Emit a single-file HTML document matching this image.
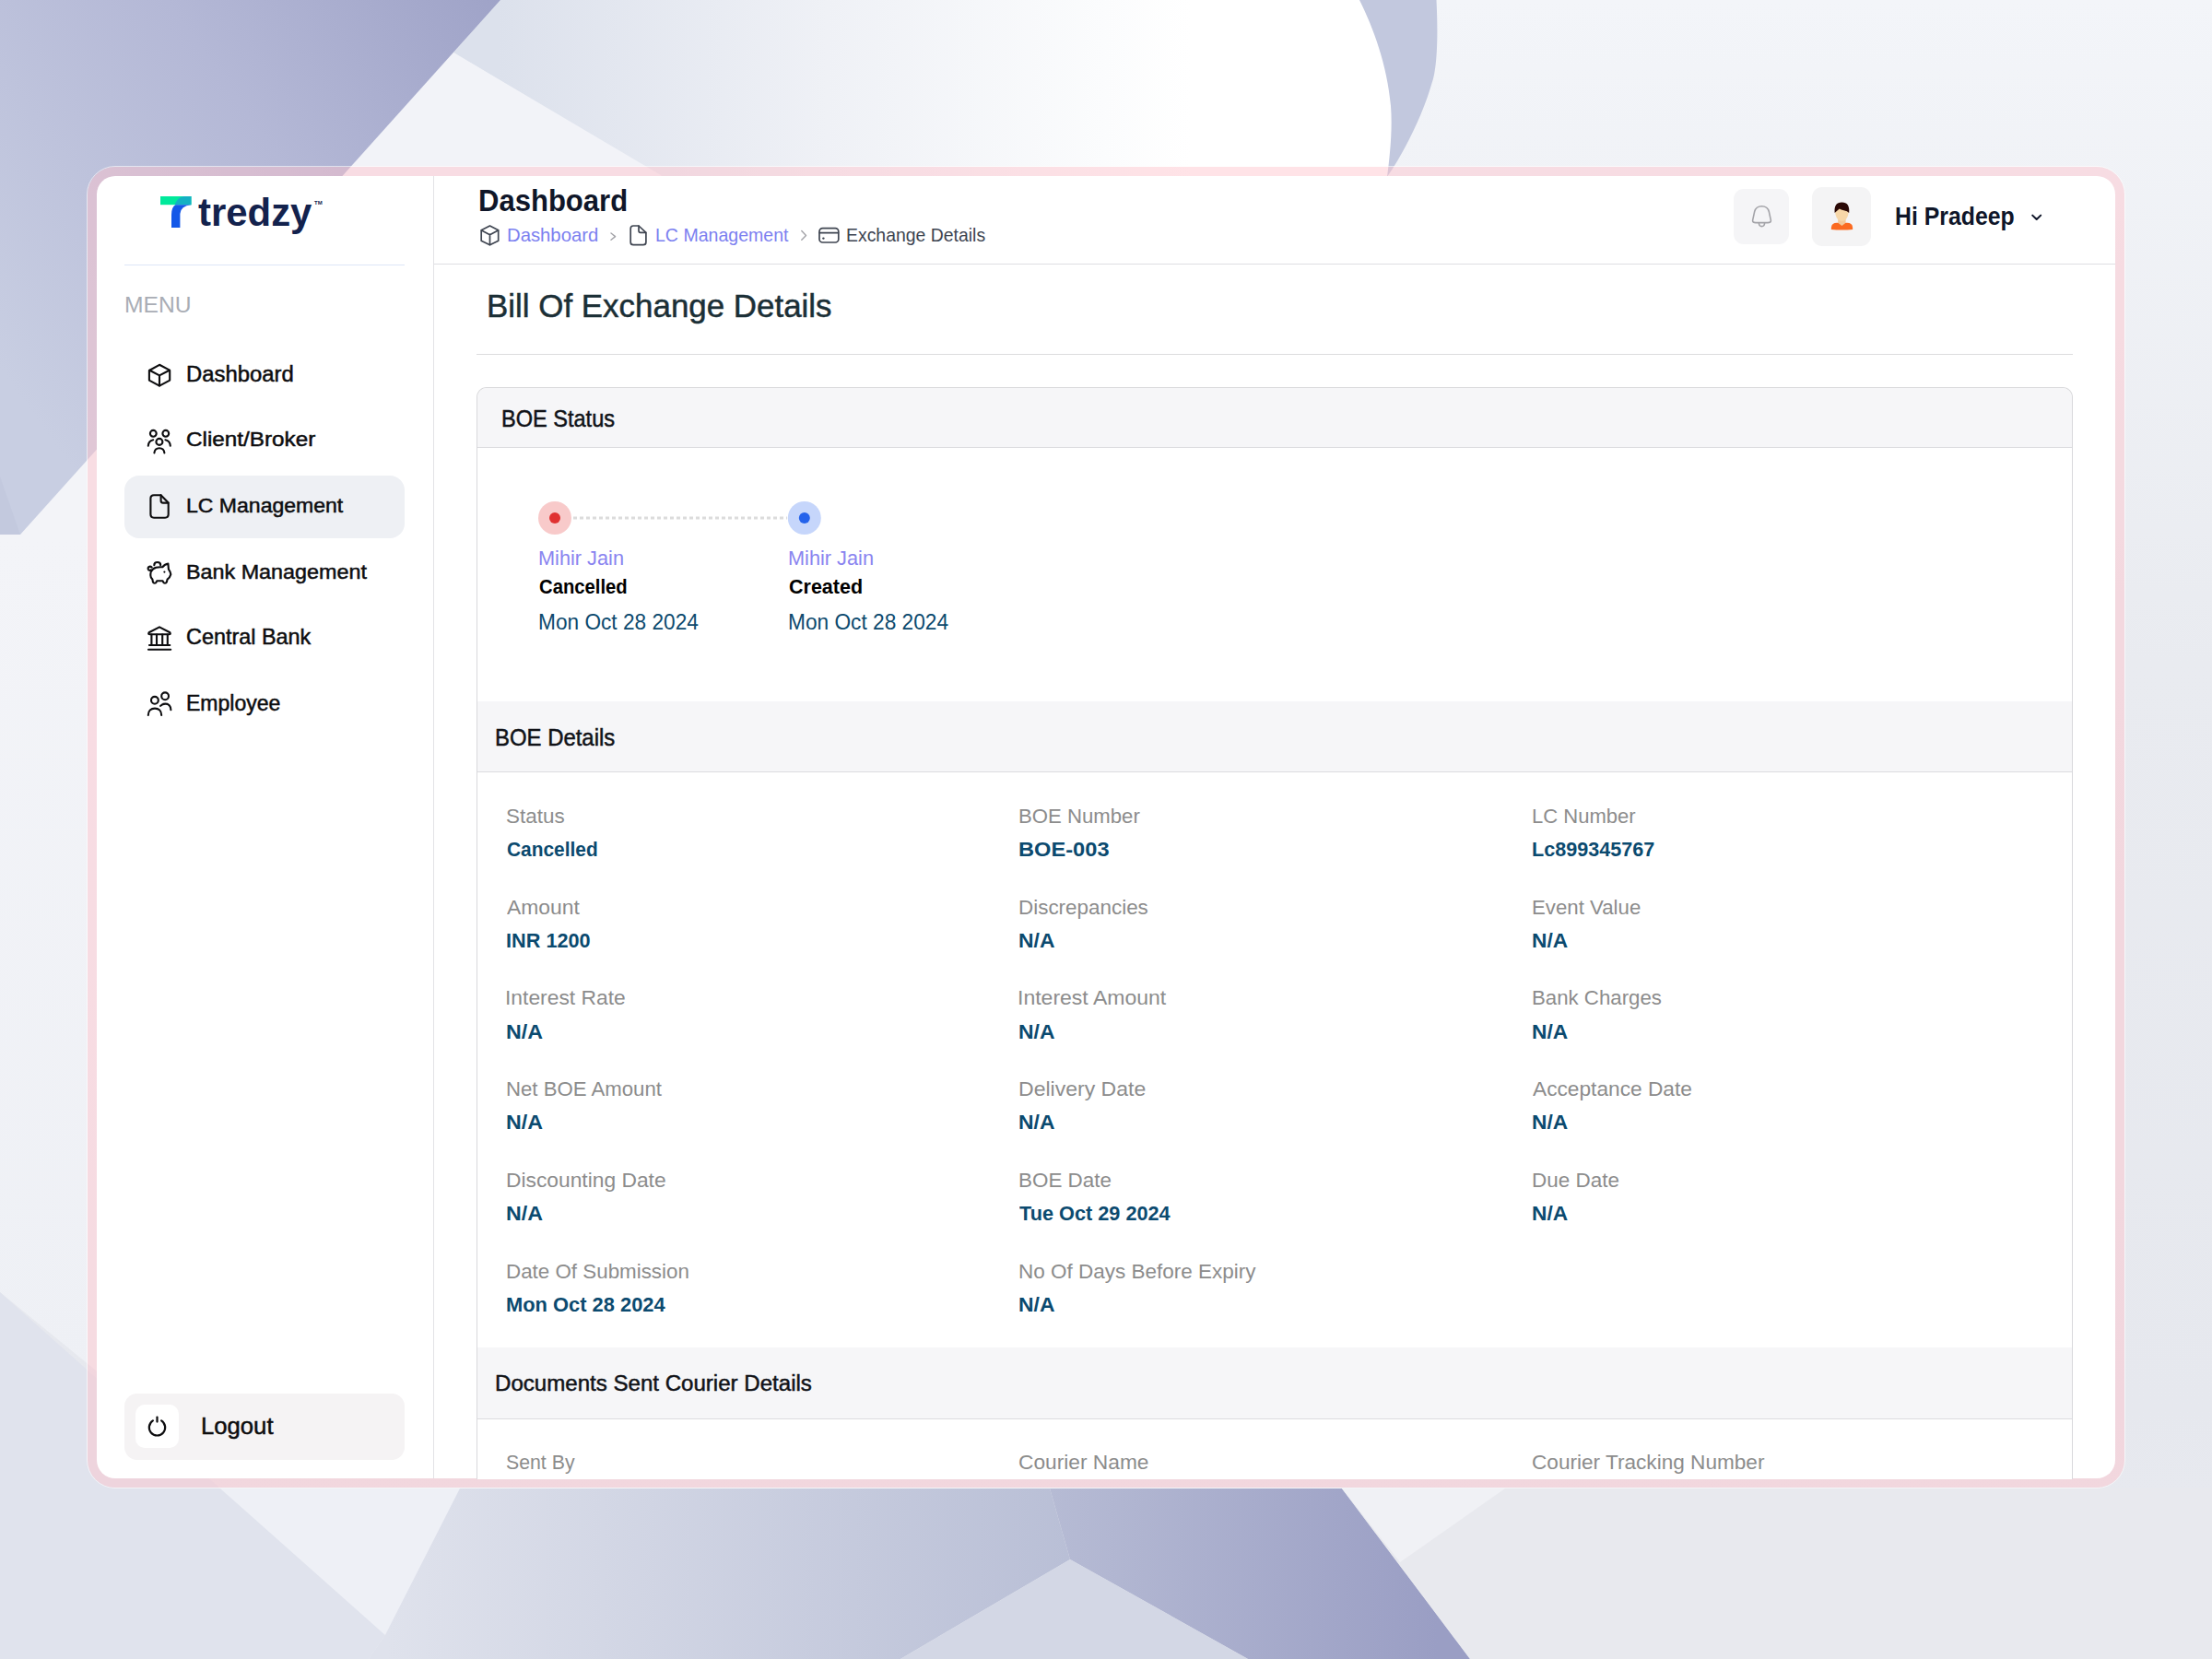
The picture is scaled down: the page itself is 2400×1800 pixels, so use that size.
<!DOCTYPE html>
<html><head><meta charset="utf-8"><title>Bill Of Exchange Details</title>
<style>
html,body{margin:0;padding:0;width:2400px;height:1800px;overflow:hidden;background:#eceef4}
body{position:relative;font-family:"Liberation Sans",sans-serif}
.t{position:absolute;white-space:nowrap;line-height:1;transform-origin:0 0}
.abs{position:absolute}
</style></head><body>
<svg class="abs" style="left:0;top:0" width="2400" height="1800" viewBox="0 0 2400 1800">
<defs>
<linearGradient id="gTL" x1="0" y1="400" x2="560" y2="0" gradientUnits="userSpaceOnUse">
<stop offset="0" stop-color="#c8cee2"/><stop offset="0.55" stop-color="#b4b8d6"/><stop offset="1" stop-color="#9ea2c7"/></linearGradient>
<linearGradient id="gTop" x1="540" y1="0" x2="1480" y2="0" gradientUnits="userSpaceOnUse">
<stop offset="0" stop-color="#dce1ec"/><stop offset="0.38" stop-color="#eff1f6"/><stop offset="0.7" stop-color="#fbfcfd"/><stop offset="0.8" stop-color="#ffffff"/><stop offset="1" stop-color="#ffffff"/></linearGradient>
<linearGradient id="gB3" x1="420" y1="0" x2="1160" y2="0" gradientUnits="userSpaceOnUse">
<stop offset="0" stop-color="#dfe2ec"/><stop offset="1" stop-color="#b9bfd6"/></linearGradient>
<linearGradient id="gB4" x1="1140" y1="0" x2="1560" y2="0" gradientUnits="userSpaceOnUse">
<stop offset="0" stop-color="#b6bbd4"/><stop offset="1" stop-color="#9a9ec4"/></linearGradient>
<linearGradient id="gR" x1="0" y1="0" x2="0" y2="1800" gradientUnits="userSpaceOnUse">
<stop offset="0" stop-color="#f3f5f9"/><stop offset="0.4" stop-color="#e9ebf0"/><stop offset="0.85" stop-color="#e6e8ee"/><stop offset="1" stop-color="#e9ebf1"/></linearGradient>
<linearGradient id="gL" x1="0" y1="580" x2="0" y2="1500" gradientUnits="userSpaceOnUse">
<stop offset="0" stop-color="#f3f4f8"/><stop offset="1" stop-color="#eef0f5"/></linearGradient>
</defs>
<rect x="0" y="0" width="2400" height="1800" fill="url(#gR)"/>
<!-- left strip light -->
<polygon points="0,580 120,470 120,1500 0,1402" fill="url(#gL)"/>
<!-- top area right of purple diagonal -->
<polygon points="543,0 1530,0 1530,100 1506,192 717,192 492,57" fill="url(#gTop)"/>
<!-- light triangle -->
<polygon points="492,57 717,190 760,260 300,260" fill="#f2f3f8"/>
<!-- top-left purple -->
<polygon points="0,0 543,0 22,580 0,580" fill="url(#gTL)"/>
<polygon points="0,517 22,580 0,580" fill="#bfc7dc" opacity="0.6"/>
<!-- crescent -->
<path d="M1475,0 L1558.5,0 C1561,50 1558,80 1553,92 C1545,120 1528,158 1505,192 C1508,170 1511,140 1509,115 C1505,70 1490,30 1475,0 Z" fill="#c2c8de"/>
<!-- bottom -->
<polygon points="0,1402 239,1615 418,1774 400,1800 0,1800" fill="#e0e3ed"/>
<polygon points="239,1615 499,1615 418,1774" fill="#eef0f6"/>
<polygon points="499,1615 1139,1615 1161,1692 977,1800 400,1800 418,1774" fill="url(#gB3)"/>
<polygon points="1139,1615 1456,1615 1595,1800 1354,1800 1161,1692" fill="url(#gB4)"/>
<polygon points="1161,1692 1354,1800 977,1800" fill="#d3d7e5"/>
<polygon points="1456,1615 2400,1615 2400,1800 1595,1800" fill="#e8e9ee"/>
<polygon points="1456,1615 1633,1615 1519,1695" fill="#f0f1f5"/>
</svg>

<!-- frame -->
<div class="abs" style="left:94px;top:180px;width:2210px;height:1433px;border:1px solid rgba(255,255,255,0.6);border-radius:31px"></div>
<div class="abs" style="left:95px;top:181px;width:2210px;height:1433px;border-radius:30px;background:rgba(255,192,202,0.45)"></div>
<div class="abs" style="left:105px;top:191px;width:2190px;height:1413px;border-radius:20px;background:#fff"></div>
<!-- lines & boxes -->
<div class="abs" style="left:470px;top:191px;width:1px;height:1413px;background:#e3e3e6"></div>
<div class="abs" style="left:135px;top:287px;width:304px;height:1px;background:#dde6f7"></div>
<div class="abs" style="left:471px;top:286px;width:1824px;height:1px;background:#dedee2"></div>
<div class="abs" style="left:135px;top:516px;width:304px;height:68px;border-radius:16px;background:#eef0f4"></div>
<div class="abs" style="left:135px;top:1512px;width:304px;height:72px;border-radius:14px;background:#f5f3f4"></div>
<div class="abs" style="left:147px;top:1524px;width:47px;height:47px;border-radius:10px;background:#ffffff"></div>
<div class="abs" style="left:1881px;top:205px;width:60px;height:60px;border-radius:11px;background:#f5f5f7"></div>
<div class="abs" style="left:1966px;top:203px;width:64px;height:64px;border-radius:11px;background:#f4f4f5"></div>
<div class="abs" style="left:517px;top:384px;width:1732px;height:1px;background:#dcdcde"></div>
<!-- card -->
<div class="abs" style="left:517px;top:420px;width:1730px;height:1184px;border:1px solid #d9d9dc;border-bottom:none;border-radius:11px 11px 0 0;background:#fff;overflow:hidden">
  <div class="abs" style="left:0;top:0;width:1730px;height:64px;background:#f6f6f8;border-bottom:1px solid #dcdcdf"></div>
  <div class="abs" style="left:0;top:340px;width:1730px;height:76px;background:#f6f6f8;border-bottom:1px solid #dcdcdf"></div>
  <div class="abs" style="left:0;top:1041px;width:1730px;height:77px;background:#f6f6f8;border-bottom:1px solid #dcdcdf"></div>
</div>
<!-- timeline -->
<svg class="abs" style="left:0;top:0" width="2400" height="1800">
<line x1="622" y1="562" x2="854" y2="562" stroke="#dcdcdc" stroke-width="3" stroke-dasharray="4 3"/>
<circle cx="602" cy="562" r="18" fill="#f8caca"/><circle cx="602" cy="562" r="6" fill="#e03131"/>
<circle cx="872.8" cy="562" r="18" fill="#c6d6fb"/><circle cx="872.8" cy="562" r="6" fill="#2563eb"/>
</svg>
<!-- logo mark -->
<svg class="abs" style="left:0;top:0" width="2400" height="1800">
<defs><linearGradient id="lgT" x1="174" y1="0" x2="208" y2="0" gradientUnits="userSpaceOnUse"><stop offset="0" stop-color="#00e89a"/><stop offset="0.45" stop-color="#00e0a0"/><stop offset="0.55" stop-color="#10b5c0"/><stop offset="1" stop-color="#13adc4"/></linearGradient></defs>
<rect x="174" y="213" width="33.5" height="9.2" fill="#00e99b"/>
<path d="M189.5,222.2 Q192.5,213.8 200,213 L207.5,213 L207.5,222.2 Z" fill="#13b1c3"/>
<path d="M186,247 L186,233 Q186,224.5 190.5,222.2 L207.5,222.2 Q196,223.2 195.4,232 L195.4,247 Z" fill="#1458e8"/>
<text x="341" y="222" font-family="Liberation Sans" font-weight="bold" font-size="6" fill="#13224d">TM</text>
</svg>
<!-- icons -->
<svg class="abs" style="left:0;top:0" width="2400" height="1800" fill="none" stroke-linecap="round" stroke-linejoin="round">
<!-- sidebar: cube -->
<g stroke="#0d0d0f" stroke-width="2.1">
<path d="M173,395.8 L184,401.6 Q184.2,401.8 184.2,402.2 L184.2,412.6 L173,418.6 L161.9,412.6 L161.9,402 Z"/>
<path d="M162.3,401.8 L173,407.4 L183.8,401.8 M173,407.4 V418.4"/>
</g>
<!-- users group -->
<g stroke="#0d0d0f" stroke-width="2.1">
<circle cx="166.3" cy="470.3" r="3.4"/><circle cx="179.8" cy="470.3" r="3.4"/><circle cx="172.9" cy="479.4" r="3.5"/>
<path d="M166.2,477.3 C162.8,478 161,480.5 160.8,483.8"/>
<path d="M179.4,477.3 C182.8,478 184.6,480.5 184.8,483.8"/>
<path d="M167.4,491.4 C167.8,487.8 170,486.3 172.9,486.3 C175.8,486.3 178,487.8 178.4,491.4"/>
</g>
<!-- file -->
<g stroke="#0d0d0f" stroke-width="2.1">
<path d="M174.6,537.2 L167,537.2 Q163.4,537.2 163.4,540.8 L163.4,558.1 Q163.4,561.7 167,561.7 L179.1,561.7 Q182.7,561.7 182.7,558.1 L182.7,545.6 Z"/>
<path d="M174.6,537.4 L174.6,543.3 Q174.6,545.6 176.9,545.6 L182.5,545.6"/>
</g>
<!-- piggy -->
<g stroke="#0d0d0f" stroke-width="2.1">
<path d="M163.3,624 C163.3,617.8 168,615.3 174,615.3 L176.3,615.3 C177.8,613.3 180.2,611.8 182.4,611.6 L182.9,617.7 C184,619.2 185,621 185.3,623.2 C184.8,625.3 183.3,627.2 181.6,628.6 L180.8,631.7 C180.3,633 177.7,633 177.2,631.7 L176.6,630.3 L170.2,630.3 L169.6,631.7 C169.1,633 166.5,633 166,631.7 L165.4,628.6 C163.9,627.3 163.3,625.6 163.3,624 Z"/>
<path d="M167.3,613.2 C167.3,609 174.2,609 174.2,613.2"/>
<path d="M164.7,615.6 C162.6,613.6 160,615.3 160.8,617.7 C161.3,619 162.6,619.2 163.6,618.4"/>
</g>
<circle cx="178.4" cy="620.6" r="1.1" fill="#0d0d0f"/>
<!-- bank -->
<g stroke="#0d0d0f" stroke-width="2.1">
<path d="M161.6,686.2 L173,680.4 L184.4,686.2 Q185.6,688.3 183.4,688.3 L162.6,688.3 Q160.4,688.3 161.6,686.2 Z"/>
<path d="M164.4,688.6 V699.6 M170,688.6 V699.6 M176.2,688.6 V699.6 M181.8,688.6 V699.6"/>
<path d="M162,700 H184.3"/>
<path d="M161,704.7 H185.2"/>
</g>
<!-- employee -->
<g stroke="#0d0d0f" stroke-width="2.1">
<circle cx="167.9" cy="759.8" r="3.9"/><circle cx="179.1" cy="755.3" r="3.9"/>
<path d="M160.8,776 C160.8,771.2 163.8,768.6 168,768.6 C172.2,768.6 175.2,771.2 175.2,776"/>
<path d="M174.1,765.9 C175.4,764.4 177.2,763.6 179.4,763.6 C183.2,763.6 185.4,766.5 185.4,770.3"/>
</g>
<!-- power -->
<g stroke="#0d0d0f" stroke-width="2.2">
<path d="M165.9,1541.4 A8.7,8.7 0 1 0 175.1,1541.4"/>
<path d="M170.5,1537.6 V1542.6"/>
</g>
<!-- breadcrumb -->
<g stroke="#3f4551" stroke-width="1.7">
<path d="M531.5,245 L540.7,249.7 L540.7,261.2 L531.5,265.8 L522.2,261.2 L522.2,249.7 Z"/>
<path d="M522.5,250 L531.5,254.7 L540.4,250 M531.5,254.7 V265.5"/>
<path d="M693,245 L687.2,245 Q684.2,245 684.2,248 L684.2,262.7 Q684.2,265.7 687.2,265.7 L697.9,265.7 Q700.9,265.7 700.9,262.7 L700.9,252.4 Z"/>
<path d="M693,245.2 L693,250.2 Q693,252.3 695,252.3 L700.7,252.3"/>
<rect x="889" y="247.6" width="20.8" height="15.4" rx="3.6"/>
<path d="M889.3,252.6 H909.5"/>
</g>
<circle cx="893.4" cy="258.6" r="1.2" fill="#3f4551"/>
<g stroke="#a3a3a8" stroke-width="1.4">
<path d="M663,253 L667.6,256.6 L663,260.2"/>
<path d="M869.8,250.6 L874.5,255.4 L869.8,260.2"/>
</g>
<!-- bell -->
<g stroke="#a3a3a8" stroke-width="1.6">
<path d="M1905,241.6 Q1901.3,241.6 1901.6,239.2 L1903.6,229.8 Q1905.2,223.8 1911.5,223.8 Q1917.8,223.8 1919.4,229.8 L1921.4,239.2 Q1921.7,241.6 1918,241.6 Z"/>
<path d="M1908.4,242 Q1908.6,245.6 1911.5,245.6 Q1914.4,245.6 1914.6,242"/>
</g>
<!-- chevron down -->
<path d="M2205.2,233.6 L2209.7,238 L2214.2,233.6" stroke="#0f1629" stroke-width="2"/>
</svg>
<!-- avatar -->
<svg class="abs" style="left:0;top:0" width="2400" height="1800">
<path d="M1986.8,249 L1987,246.3 Q1987.5,241.8 1993,241.8 L2004,241.8 Q2009.6,241.8 2010,246.3 L2010.2,249 Q1998.5,250.2 1986.8,249 Z" fill="#fb6a20"/>
<path d="M1994.2,236.5 L2002.6,236.5 L2002.6,241.8 L1998.4,245 L1994.2,241.8 Z" fill="#f3c99a"/>
<path d="M1990.9,226 Q1990.9,239.8 1998.4,239.8 Q2005.9,239.8 2005.9,226 Z" fill="#f7d7a8"/>
<path d="M1990.6,231 Q1989.6,219.6 1998.4,219.6 Q2007.2,219.6 2006.2,231 Q2004.5,228.6 2000.5,228.2 Q1997.5,227.9 1995.8,226.6 Q1993,229 1990.6,231 Z" fill="#2a0906"/>
</svg>


<div class="t" style="left:134.95px;top:319.52px;font-size:23.62px;font-weight:normal;color:#a9adb5;transform:scaleX(1.0450)">MENU</div>
<div class="t" style="left:201.96px;top:394.62px;font-size:23.04px;font-weight:normal;color:#0d0d0f;transform:scaleX(1.0355);-webkit-text-stroke:0.5px #0d0d0f">Dashboard</div>
<div class="t" style="left:201.92px;top:466.21px;font-size:22.46px;font-weight:normal;color:#0d0d0f;transform:scaleX(1.0805);-webkit-text-stroke:0.5px #0d0d0f">Client/Broker</div>
<div class="t" style="left:201.97px;top:537.81px;font-size:22.46px;font-weight:normal;color:#0d0d0f;transform:scaleX(1.0256);-webkit-text-stroke:0.5px #0d0d0f">LC Management</div>
<div class="t" style="left:201.98px;top:609.33px;font-size:22.9px;font-weight:normal;color:#0d0d0f;transform:scaleX(1.0194);-webkit-text-stroke:0.5px #0d0d0f">Bank Management</div>
<div class="t" style="left:201.99px;top:680.29px;font-size:23.19px;font-weight:normal;color:#0d0d0f;transform:scaleX(1.0086);-webkit-text-stroke:0.5px #0d0d0f">Central Bank</div>
<div class="t" style="left:202.00px;top:751.62px;font-size:23.04px;font-weight:normal;color:#0d0d0f;transform:scaleX(0.9989);-webkit-text-stroke:0.5px #0d0d0f">Employee</div>
<div class="t" style="left:218.30px;top:1534.90px;font-size:25.65px;font-weight:normal;color:#0d0d0f;transform:scaleX(1.0013);-webkit-text-stroke:0.5px #0d0d0f">Logout</div>
<div class="t" style="left:519.14px;top:200.67px;font-size:33.33px;font-weight:bold;color:#0f1629;transform:scaleX(0.9314)">Dashboard</div>
<div class="t" style="left:550.00px;top:244.75px;font-size:20.29px;font-weight:normal;color:#7c80f0;transform:scaleX(1.0006)">Dashboard</div>
<div class="t" style="left:710.54px;top:244.75px;font-size:20.29px;font-weight:normal;color:#7c80f0;transform:scaleX(0.9638)">LC Management</div>
<div class="t" style="left:918.04px;top:244.75px;font-size:20.29px;font-weight:normal;color:#3d4451;transform:scaleX(0.9573)">Exchange Details</div>
<div class="t" style="left:2055.58px;top:221.47px;font-size:27.1px;font-weight:bold;color:#0f1629;transform:scaleX(0.9165)">Hi Pradeep</div>
<div class="t" style="left:528.02px;top:314.06px;font-size:35.22px;font-weight:normal;color:#1b2f36;transform:scaleX(0.9915);-webkit-text-stroke:0.5px #1b2f36">Bill Of Exchange Details</div>
<div class="t" style="left:543.76px;top:441.90px;font-size:25.65px;font-weight:normal;color:#111318;transform:scaleX(0.9181);-webkit-text-stroke:0.5px #111318">BOE Status</div>
<div class="t" style="left:584.02px;top:595.46px;font-size:22.17px;font-weight:normal;color:#8a84f0;transform:scaleX(0.9808)">Mihir Jain</div>
<div class="t" style="left:855.02px;top:595.46px;font-size:22.17px;font-weight:normal;color:#8a84f0;transform:scaleX(0.9808)">Mihir Jain</div>
<div class="t" style="left:585.00px;top:625.52px;font-size:21.74px;font-weight:bold;color:#000000;transform:scaleX(0.9320)">Cancelled</div>
<div class="t" style="left:856.00px;top:625.52px;font-size:21.74px;font-weight:bold;color:#000000;transform:scaleX(0.9893)">Created</div>
<div class="t" style="left:584.05px;top:663.20px;font-size:23.77px;font-weight:normal;color:#0c4a6e;transform:scaleX(0.9536)">Mon Oct 28 2024</div>
<div class="t" style="left:855.05px;top:663.20px;font-size:23.77px;font-weight:normal;color:#0c4a6e;transform:scaleX(0.9547)">Mon Oct 28 2024</div>
<div class="t" style="left:536.98px;top:788.41px;font-size:24.93px;font-weight:normal;color:#111318;transform:scaleX(0.9597);-webkit-text-stroke:0.5px #111318">BOE Details</div>
<div class="t" style="left:537.32px;top:1488.50px;font-size:24.35px;font-weight:normal;color:#111318;transform:scaleX(0.9889);-webkit-text-stroke:0.5px #111318">Documents Sent Courier Details</div>
<div class="t" style="left:548.90px;top:874.71px;font-size:22.46px;font-weight:normal;color:#8c8c8c;transform:scaleX(0.9996)">Status</div>
<div class="t" style="left:549.90px;top:910.91px;font-size:22.46px;font-weight:bold;color:#0b4a6f;transform:scaleX(0.9311)">Cancelled</div>
<div class="t" style="left:1105.01px;top:874.71px;font-size:22.46px;font-weight:normal;color:#8c8c8c;transform:scaleX(0.9870)">BOE Number</div>
<div class="t" style="left:1104.95px;top:910.91px;font-size:22.46px;font-weight:bold;color:#0b4a6f;transform:scaleX(1.0531)">BOE-003</div>
<div class="t" style="left:1661.62px;top:874.71px;font-size:22.46px;font-weight:normal;color:#8c8c8c;transform:scaleX(0.9814)">LC Number</div>
<div class="t" style="left:1661.64px;top:910.91px;font-size:22.46px;font-weight:bold;color:#0b4a6f;transform:scaleX(0.9606)">Lc899345767</div>
<div class="t" style="left:549.90px;top:973.51px;font-size:22.46px;font-weight:normal;color:#8c8c8c;transform:scaleX(1.0187)">Amount</div>
<div class="t" style="left:548.93px;top:1009.71px;font-size:22.46px;font-weight:bold;color:#0b4a6f;transform:scaleX(0.9661)">INR 1200</div>
<div class="t" style="left:1105.00px;top:973.51px;font-size:22.46px;font-weight:normal;color:#8c8c8c;transform:scaleX(0.9987)">Discrepancies</div>
<div class="t" style="left:1104.98px;top:1009.71px;font-size:22.46px;font-weight:bold;color:#0b4a6f;transform:scaleX(1.0199)">N/A</div>
<div class="t" style="left:1661.61px;top:973.51px;font-size:22.46px;font-weight:normal;color:#8c8c8c;transform:scaleX(0.9905)">Event Value</div>
<div class="t" style="left:1661.59px;top:1009.71px;font-size:22.46px;font-weight:bold;color:#0b4a6f;transform:scaleX(1.0119)">N/A</div>
<div class="t" style="left:547.87px;top:1072.31px;font-size:22.46px;font-weight:normal;color:#8c8c8c;transform:scaleX(1.0170)">Interest Rate</div>
<div class="t" style="left:548.87px;top:1108.51px;font-size:22.46px;font-weight:bold;color:#0b4a6f;transform:scaleX(1.0333)">N/A</div>
<div class="t" style="left:1103.95px;top:1072.31px;font-size:22.46px;font-weight:normal;color:#8c8c8c;transform:scaleX(1.0251)">Interest Amount</div>
<div class="t" style="left:1104.98px;top:1108.51px;font-size:22.46px;font-weight:bold;color:#0b4a6f;transform:scaleX(1.0199)">N/A</div>
<div class="t" style="left:1661.61px;top:1072.31px;font-size:22.46px;font-weight:normal;color:#8c8c8c;transform:scaleX(0.9904)">Bank Charges</div>
<div class="t" style="left:1661.59px;top:1108.51px;font-size:22.46px;font-weight:bold;color:#0b4a6f;transform:scaleX(1.0119)">N/A</div>
<div class="t" style="left:548.91px;top:1171.11px;font-size:22.46px;font-weight:normal;color:#8c8c8c;transform:scaleX(0.9879)">Net BOE Amount</div>
<div class="t" style="left:548.87px;top:1207.31px;font-size:22.46px;font-weight:bold;color:#0b4a6f;transform:scaleX(1.0333)">N/A</div>
<div class="t" style="left:1104.97px;top:1171.11px;font-size:22.46px;font-weight:normal;color:#8c8c8c;transform:scaleX(1.0257)">Delivery Date</div>
<div class="t" style="left:1104.98px;top:1207.31px;font-size:22.46px;font-weight:bold;color:#0b4a6f;transform:scaleX(1.0199)">N/A</div>
<div class="t" style="left:1662.60px;top:1171.11px;font-size:22.46px;font-weight:normal;color:#8c8c8c;transform:scaleX(1.0111)">Acceptance Date</div>
<div class="t" style="left:1661.59px;top:1207.31px;font-size:22.46px;font-weight:bold;color:#0b4a6f;transform:scaleX(1.0119)">N/A</div>
<div class="t" style="left:548.88px;top:1269.91px;font-size:22.46px;font-weight:normal;color:#8c8c8c;transform:scaleX(1.0153)">Discounting Date</div>
<div class="t" style="left:548.87px;top:1306.11px;font-size:22.46px;font-weight:bold;color:#0b4a6f;transform:scaleX(1.0333)">N/A</div>
<div class="t" style="left:1105.00px;top:1269.91px;font-size:22.46px;font-weight:normal;color:#8c8c8c;transform:scaleX(0.9980)">BOE Date</div>
<div class="t" style="left:1106.00px;top:1306.11px;font-size:22.46px;font-weight:bold;color:#0b4a6f;transform:scaleX(0.9668)">Tue Oct 29 2024</div>
<div class="t" style="left:1661.60px;top:1269.91px;font-size:22.46px;font-weight:normal;color:#8c8c8c;transform:scaleX(1.0003)">Due Date</div>
<div class="t" style="left:1661.59px;top:1306.11px;font-size:22.46px;font-weight:bold;color:#0b4a6f;transform:scaleX(1.0119)">N/A</div>
<div class="t" style="left:548.90px;top:1368.71px;font-size:22.46px;font-weight:normal;color:#8c8c8c;transform:scaleX(0.9961)">Date Of Submission</div>
<div class="t" style="left:548.93px;top:1404.91px;font-size:22.46px;font-weight:bold;color:#0b4a6f;transform:scaleX(0.9745)">Mon Oct 28 2024</div>
<div class="t" style="left:1105.00px;top:1368.71px;font-size:22.46px;font-weight:normal;color:#8c8c8c;transform:scaleX(1.0022)">No Of Days Before Expiry</div>
<div class="t" style="left:1104.98px;top:1404.91px;font-size:22.46px;font-weight:bold;color:#0b4a6f;transform:scaleX(1.0199)">N/A</div>
<div class="t" style="left:548.95px;top:1575.51px;font-size:22.46px;font-weight:normal;color:#8c8c8c;transform:scaleX(0.9477)">Sent By</div>
<div class="t" style="left:1104.99px;top:1575.51px;font-size:22.46px;font-weight:normal;color:#8c8c8c;transform:scaleX(1.0126)">Courier Name</div>
<div class="t" style="left:1661.59px;top:1575.51px;font-size:22.46px;font-weight:normal;color:#8c8c8c;transform:scaleX(1.0066)">Courier Tracking Number</div>
<div class="t" style="left:215.00px;top:210.27px;font-size:42.03px;font-weight:bold;color:#13224d;transform:scaleX(0.9969)">tredzy</div>
</body></html>
